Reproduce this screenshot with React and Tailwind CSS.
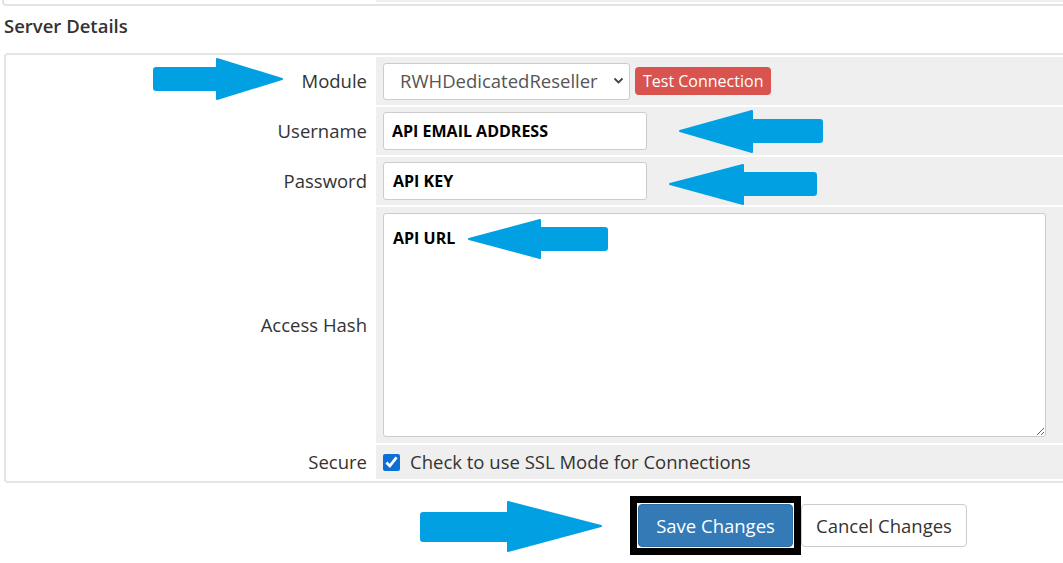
import React from "react";

const arrows = [
  { shaft: [154, 217, 68, 90], head: [[217, 59], [282, 79], [217, 99]] },
  { shaft: [752, 822, 120, 142], head: [[752, 111], [680, 131], [752, 152]] },
  { shaft: [743, 816, 173, 195], head: [[743, 165], [670, 184], [743, 204]] },
  { shaft: [540, 607, 228, 250], head: [[540, 220], [469, 239], [540, 258]] },
  { shaft: [421, 510, 513, 541], head: [[508, 502], [601, 526], [508, 551]] },
];

const Arrows = () => (
  <svg
    className="absolute left-0 top-0 pointer-events-none"
    width="1063"
    height="563"
    viewBox="0 0 1063 563"
  >
    {arrows.map((a, i) => (
      <g key={i} fill="#00a0e3" stroke="#00a0e3" strokeWidth="2" strokeLinejoin="round">
        <rect
          x={a.shaft[0]}
          y={a.shaft[2]}
          width={a.shaft[1] - a.shaft[0]}
          height={a.shaft[3] - a.shaft[2]}
          rx="2"
        />
        <polygon points={a.head.map((p) => p.join(",")).join(" ")} />
      </g>
    ))}
  </svg>
);

const Row = ({ label, height, children }) => (
  <>
    <div
      className={`flex items-center justify-end pr-[7px] bg-white text-[18.5px] text-[#333] ${height}`}
    >
      {label}
    </div>
    <div className={`flex items-center bg-[#efefef] pl-[7px] ${height}`}>{children}</div>
  </>
);

const App = () => {
  return (
    <div
      className="relative w-[1063px] h-[563px] overflow-hidden bg-white text-[#333]"
      style={{ fontFamily: '"Open Sans", "Liberation Sans", sans-serif' }}
    >
      {/* bottom of the previous panel */}
      <div className="ml-[2px] w-[1070px] h-[6px] border-l-2 border-b-2 border-[#e3e3e3] rounded-bl-[4px] flex">
        <div className="w-[372px]" />
        <div className="flex-1 h-[2px] bg-[#efefef]" />
      </div>

      <h2 className="mt-[8px] ml-[4px] text-[18.5px] leading-[24px] font-semibold text-[#333]">
        Server Details
      </h2>

      <div className="mt-[15px] ml-[4px] w-[1080px] border-2 border-[#e5e5e5] rounded-[4px] p-[2px]">
        <div className="grid grid-cols-[366px_1fr] gap-[2px]">
          <Row label="Module" height="h-[48px]">
            <div className="relative">
              <select className="appearance-none w-[247px] h-[37px] bg-white border border-[#ccc] rounded-[3px] pl-[16px] text-[18.5px] text-[#555] outline-none">
                <option>RWHDedicatedReseller</option>
              </select>
              <svg
                className="absolute right-[6px] top-[14px] pointer-events-none"
                width="11"
                height="8"
                viewBox="0 0 11 8"
              >
                <path d="M1.5 1.5 L5.5 5.5 L9.5 1.5" fill="none" stroke="#444" strokeWidth="1.8" />
              </svg>
            </div>
            <button className="ml-[5px] h-[28px] px-[8px] rounded-[4px] bg-[#d9534f] text-white text-[16px] leading-none">
              Test Connection
            </button>
          </Row>

          <Row label="Username" height="h-[48px]">
            <input
              readOnly
              value="API EMAIL ADDRESS"
              className="w-[264px] h-[38px] bg-white border border-[#ccc] rounded-[3px] px-[8px] text-[16px] font-bold text-black outline-none"
            />
          </Row>

          <Row label="Password" height="h-[48px]">
            <input
              readOnly
              value="API KEY"
              className="w-[264px] h-[38px] bg-white border border-[#ccc] rounded-[3px] px-[9px] text-[16px] font-bold text-black outline-none"
            />
          </Row>

          <Row label="Access Hash" height="h-[236px]">
            <textarea
              readOnly
              value="API URL"
              className="w-[663px] h-[224px] bg-white border border-[#ccc] rounded-[3px] px-[9px] pt-[12px] text-[16px] font-bold text-black outline-none"
            />
          </Row>

          <Row label="Secure" height="h-[34px]">
            <label className="flex items-center gap-[10px] text-[18.5px] text-[#333]">
              <input
                type="checkbox"
                defaultChecked
                className="w-[17px] h-[17px] accent-[#0b6fd6]"
              />
              Check to use SSL Mode for Connections
            </label>
          </Row>
        </div>
      </div>

      <div className="mt-[13px] ml-[630px] flex items-center">
        <div className="border-[7px] border-black p-[1px] bg-white">
          <button className="w-[155px] h-[43px] rounded-[4px] bg-[#337ab7] border border-[#2e6da4] text-white text-[18.5px]">
            Save Changes
          </button>
        </div>
        <button className="w-[166px] h-[43px] rounded-[4px] bg-white border border-[#ccc] text-[#333] text-[18.5px]">
          Cancel Changes
        </button>
      </div>

      <Arrows />
    </div>
  );
};

export default App;
